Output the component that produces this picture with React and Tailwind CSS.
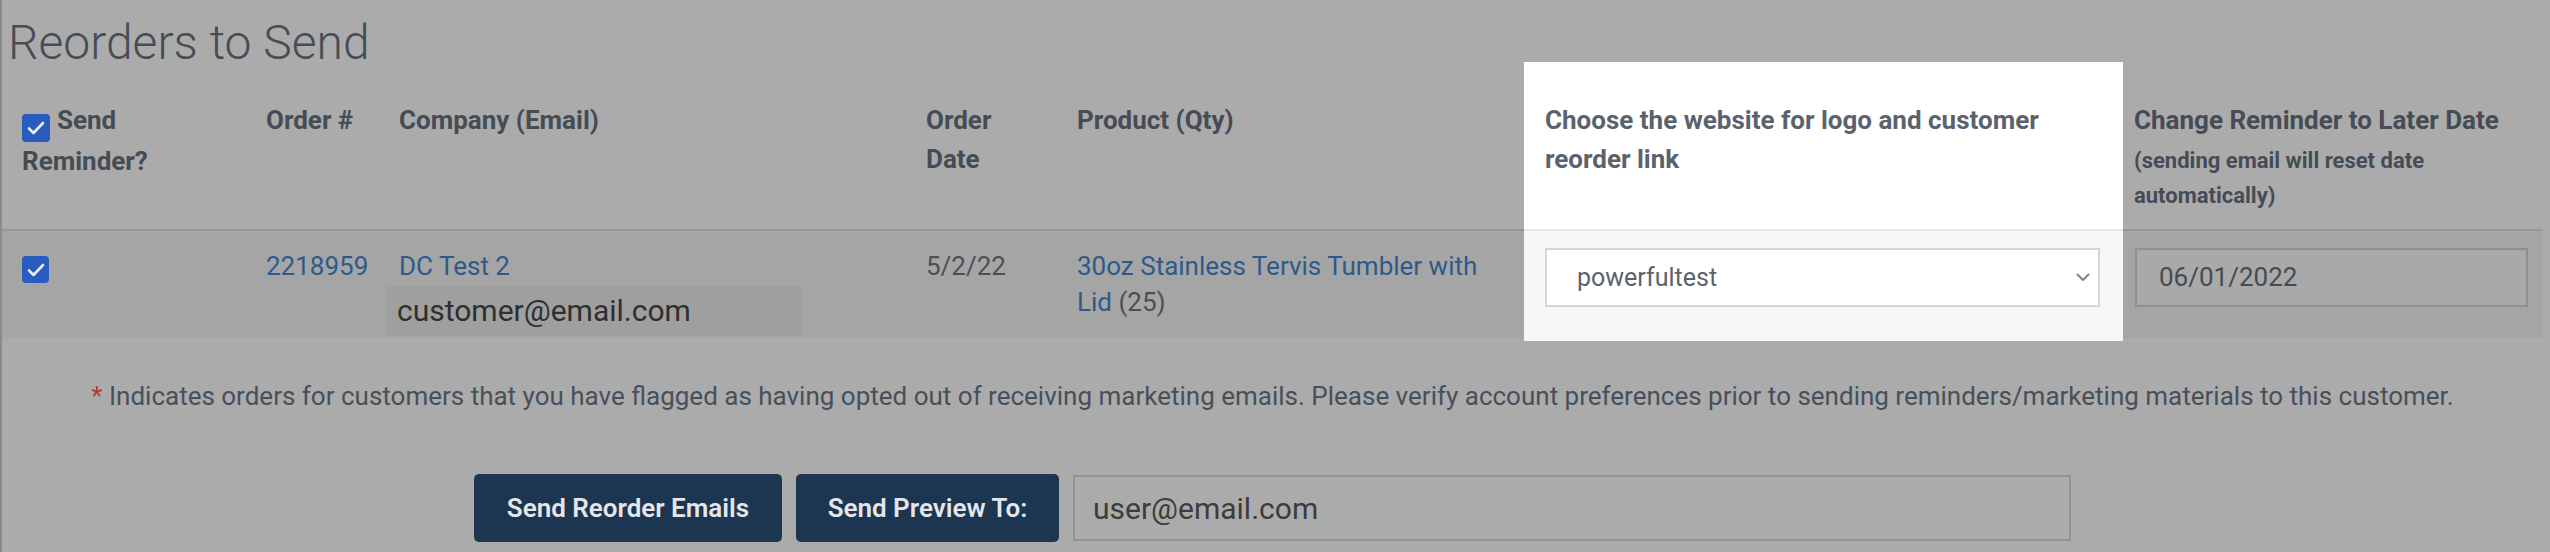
import { useState } from 'react';

function Check({ size = 28 }) {
  return (
    <span
      className="inline-flex items-center justify-center rounded-[4px] bg-[#2a5bbf] align-[-6px]"
      style={{ width: size, height: size }}
    >
      <svg width="18" height="14" viewBox="0 0 18 14" fill="none">
        <polyline points="2,7.5 6.5,12 16,2" stroke="#e9edf5" strokeWidth="2.6" strokeLinecap="round" strokeLinejoin="round" />
      </svg>
    </span>
  );
}

function Chevron() {
  return (
    <svg width="14" height="9" viewBox="0 0 14 9" fill="none">
      <polyline points="1.5,1.5 7,7 12.5,1.5" stroke="#7b838c" strokeWidth="2" strokeLinecap="round" strokeLinejoin="round" />
    </svg>
  );
}

const reorders = [
  {
    id: 2218959,
    company: 'DC Test 2',
    email: 'customer@email.com',
    date: '5/2/22',
    product: '30oz Stainless Tervis Tumbler with Lid',
    qty: 25,
    site: 'powerfultest',
    reminder: '06/01/2022',
  },
];

function App() {
  const [preview, setPreview] = useState('user@email.com');

  const th = 'h-[169px] pt-[39px] border-b-2 border-[#979797] text-[26px] leading-[39px] font-bold text-[#454c55]';
  const td = 'h-[107px] pt-[17px] bg-[#a5a5a5] text-[26px] leading-[36px]';

  return (
    <div className="w-[2550px] h-[552px] overflow-hidden bg-[#ababab] border-l-2 border-[#8a8a8a] font-[Roboto,'Liberation_Sans',sans-serif]">
      <h1 className="h-[62px] pt-[23px] pl-[6px] text-[48px] leading-[40px] font-light text-[#464d55]">
        Reorders to Send
      </h1>

      <div className="w-[2541px]">
        <div className="flex">
          <div className={`${th} w-[244px] pl-[20px] pr-[20px]`}>
            <Check size={28} />
            <span className="ml-[7px]">Send Reminder?</span>
          </div>
          <div className={`${th} w-[133px] pl-[20px]`}>Order #</div>
          <div className={`${th} w-[527px] pl-[20px]`}>Company (Email)</div>
          <div className={`${th} w-[151px] pl-[20px] pr-[20px]`}>Order Date</div>
          <div className={`${th} w-[467px] pl-[20px]`}>Product (Qty)</div>
          <div className="h-[169px] w-[599px] pt-[39px] pl-[21px] pr-[22px] bg-white border-b-2 border-[#e6e6e6] text-[26px] leading-[39px] font-bold text-[#5a636d]">
            Choose the website for logo and customer reorder link
          </div>
          <div className={`${th} w-[420px] pl-[11px] pr-[15px]`}>
            <div>Change Reminder to Later Date</div>
            <div className="pt-[3px] text-[22px] leading-[35px]">(sending email will reset date automatically)</div>
          </div>
        </div>

        {reorders.map((r) => (
          <div key={r.id} className="flex items-start h-[107px]">
            <div className={`${td} w-[244px] pl-[20px]`}>
              <div className="mt-[8px] w-[27px] h-[27px] rounded-[4px] bg-[#2a5bbf] flex items-center justify-center">
                <svg width="18" height="14" viewBox="0 0 18 14" fill="none">
                  <polyline points="2,7.5 6.5,12 16,2" stroke="#e9edf5" strokeWidth="2.6" strokeLinecap="round" strokeLinejoin="round" />
                </svg>
              </div>
            </div>
            <div className={`${td} w-[133px] pl-[20px] text-[#2e5a8b]`}>{r.id}</div>
            <div className={`${td} w-[527px] pl-[20px]`}>
              <div className="text-[#2e5a8b]">{r.company}</div>
              <div className="mt-[2px] -ml-[13px] w-[415px] h-[50px] bg-[#9f9f9f] pl-[11px] text-[30px] leading-[50px] text-[#2f2f2f]">
                {r.email}
              </div>
            </div>
            <div className={`${td} w-[151px] pl-[20px] text-[#4a5058]`}>{r.date}</div>
            <div className={`${td} w-[467px] pl-[20px] pr-[20px]`}>
              <span className="text-[#2e5a8b]">{r.product}</span>{' '}
              <span className="text-[#4b4f54]">({r.qty})</span>
            </div>
            <div className="h-[110px] w-[599px] pt-[17px] pl-[21px] bg-[#f7f7f7]">
              <div className="w-[555px] h-[59px] border-2 border-[#d6d6d6] bg-white flex items-center justify-between pl-[30px] pr-[8px] text-[25px] text-[#5b636c]">
                <span>{r.site}</span>
                <Chevron />
              </div>
            </div>
            <div className={`${td} w-[420px] pl-[12px]`}>
              <div className="w-[393px] h-[59px] border-2 border-[#8f8f8f] bg-[#a9a9a9] pl-[22px] text-[26px] leading-[55px] text-[#454b52]">
                {r.reminder}
              </div>
            </div>
          </div>
        ))}

        <p className="mt-[40px] text-center text-[26px] leading-[36px] text-[#47505a]">
          <span className="text-[#b23b36]">*</span> Indicates orders for customers that you have flagged as having opted out of receiving marketing emails. Please verify account preferences prior to sending reminders/marketing materials to this customer.
        </p>

        <div className="mt-[60px] flex justify-center items-center gap-[14px]">
          <button className="w-[308px] h-[68px] rounded-[5px] bg-[#1c3550] text-[26px] font-semibold text-[#e4e6e9]">
            Send Reorder Emails
          </button>
          <button className="w-[263px] h-[68px] rounded-[5px] bg-[#1c3550] text-[26px] font-semibold text-[#e4e6e9]">
            Send Preview To:
          </button>
          <input
            value={preview}
            onChange={(e) => setPreview(e.target.value)}
            className="w-[998px] h-[66px] border-2 border-[#929292] bg-[#ababab] pl-[18px] text-[30px] text-[#3c3c3c] outline-none"
          />
        </div>
      </div>
    </div>
  );
}

export default App;
